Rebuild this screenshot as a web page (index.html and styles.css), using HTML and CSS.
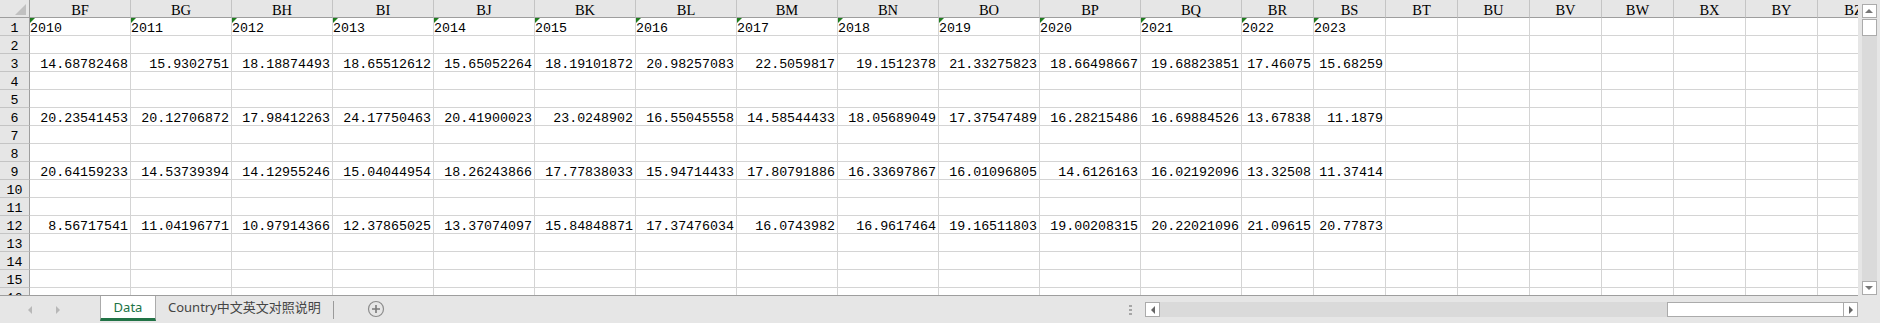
FILE: index.html
```html
<!DOCTYPE html>
<html lang="zh-CN">
<head>
    <meta charset="UTF-8">
    <meta name="viewport" content="width=device-width, initial-scale=1.0">
    <title>Data</title>
    <link rel="stylesheet" href="styles.css">
</head>
<body>
    <div class="window">
        <div class="main">
            <div class="grid" id="grid"></div>
            <div class="vscroll">
                <div class="sbtn up"><span class="tri-up"></span></div>
                <div class="vthumb"></div>
                <div class="vtrack"></div>
                <div class="sbtn down"><span class="tri-down"></span></div>
            </div>
        </div>
        <div class="bottom">
            <div class="tabnav">
                <span class="nav-left"></span>
                <span class="nav-right"></span>
            </div>
            <div class="tab active">Data</div>
            <div class="tab">Country中文英文对照说明</div>
            <div class="tabsep"></div>
            <div class="addtab">
                <svg width="18" height="18" viewBox="0 0 18 18">
                    <circle cx="9" cy="9" r="7.5" fill="none" stroke="#8c8c8c" stroke-width="1.2"/>
                    <path d="M9 5v8M5 9h8" stroke="#7a7a7a" stroke-width="1.6"/>
                </svg>
            </div>
            <div class="spacer"></div>
            <div class="dots"><i></i><i></i><i></i></div>
            <div class="hscroll">
                <div class="sbtn hbtn"><span class="tri-left"></span></div>
                <div class="htrack"></div>
                <div class="hthumb"></div>
                <div class="sbtn hbtn"><span class="tri-right"></span></div>
            </div>
        </div>
    </div>

    <script>
        const cols = ['BF','BG','BH','BI','BJ','BK','BL','BM','BN','BO','BP','BQ','BR','BS','BT','BU','BV','BW','BX','BY','BZ'];
        const values = {
            3: ['14.68782468','15.9302751','18.18874493','18.65512612','15.65052264','18.19101872','20.98257083','22.5059817','19.1512378','21.33275823','18.66498667','19.68823851','17.46075','15.68259'],
            6: ['20.23541453','20.12706872','17.98412263','24.17750463','20.41900023','23.0248902','16.55045558','14.58544433','18.05689049','17.37547489','16.28215486','16.69884526','13.67838','11.1879'],
            9: ['20.64159233','14.53739394','14.12955246','15.04044954','18.26243866','17.77838033','15.94714433','17.80791886','16.33697867','16.01096805','14.6126163','16.02192096','13.32508','11.37414'],
            12: ['8.56717541','11.04196771','10.97914366','12.37865025','13.37074097','15.84848871','17.37476034','16.0743982','16.9617464','19.16511803','19.00208315','20.22021096','21.09615','20.77873']
        };

        const grid = document.getElementById('grid');

        function addCell(cls, text) {
            const div = document.createElement('div');
            div.className = 'cell ' + cls;
            div.textContent = text || '';
            grid.appendChild(div);
        }

        addCell('corner');
        cols.forEach(c => addCell('colhead', c));

        for (let r = 1; r <= 16; r++) {
            addCell('rowhead', r);
            for (let i = 0; i < cols.length; i++) {
                if (r === 1 && i < 14) {
                    addCell('text flagged', 2010 + i);
                } else if (values[r] && i < 14) {
                    addCell('num', values[r][i]);
                } else {
                    addCell('');
                }
            }
        }
    </script>
</body>
</html>
```

FILE: styles.css
```css
body {
    margin: 0;
    background-color: #fff;
    font-family: "Liberation Mono", monospace;
}
.window {
    width: 1880px;
    height: 323px;
    display: flex;
    flex-direction: column;
    overflow: hidden;
}
.main {
    display: flex;
    height: 296px;
}
.grid {
    width: 1858px;
    display: grid;
    grid-template-columns: 30px repeat(12, 101px) repeat(9, 72px);
    grid-auto-rows: 18px;
    align-content: start;
    overflow: hidden;
    border-bottom: 1px solid #9e9e9e;
    box-sizing: border-box;
}
.cell {
    box-sizing: border-box;
    border-right: 1px solid #d4d4d4;
    border-bottom: 1px solid #d4d4d4;
    font-size: 13.3px;
    line-height: 17px;
    padding-top: 2px;
    white-space: nowrap;
    overflow: hidden;
    color: #000;
}
.corner {
    position: relative;
    background-color: #e6e6e6;
    border-right: 1px solid #9e9e9e;
    border-bottom: 1px solid #9e9e9e;
}
.corner::after {
    content: "";
    position: absolute;
    right: 3px;
    bottom: 2px;
    border-left: 11px solid transparent;
    border-bottom: 11px solid #c0c0c0;
}
.colhead {
    background-color: #e6e6e6;
    border-right-color: #c4c4c4;
    border-bottom: 1px solid #9e9e9e;
    text-align: center;
    font-family: "Liberation Serif", serif;
    font-size: 14.5px;
}
.rowhead {
    background-color: #e6e6e6;
    border-right: 1px solid #9e9e9e;
    border-bottom-color: #c4c4c4;
    text-align: center;
}
.num {
    text-align: right;
    padding-right: 2px;
}
.text {
    text-align: left;
}
.flagged {
    position: relative;
}
.flagged::before {
    content: "";
    position: absolute;
    left: 0;
    top: 0;
    border-top: 5px solid #1e7d1e;
    border-right: 5px solid transparent;
}

/* vertical scrollbar */
.vscroll {
    width: 22px;
    height: 296px;
    background-color: #e6e6e6;
    display: flex;
    flex-direction: column;
    align-items: center;
    padding: 4px 0 1px;
    box-sizing: border-box;
}
.sbtn {
    width: 15px;
    height: 14px;
    box-sizing: border-box;
    border: 1px solid #ababab;
    background-color: #fff;
    display: flex;
    align-items: center;
    justify-content: center;
    flex-shrink: 0;
}
.vthumb {
    width: 15px;
    height: 17px;
    margin-top: 1px;
    box-sizing: border-box;
    border: 1px solid #ababab;
    background-color: #fff;
}
.vtrack {
    flex: 1;
    width: 15px;
    background-color: #dadada;
}
.tri-up {
    border-left: 4px solid transparent;
    border-right: 4px solid transparent;
    border-bottom: 4px solid #777;
}
.tri-down {
    border-left: 4px solid transparent;
    border-right: 4px solid transparent;
    border-top: 4px solid #777;
}
.tri-left {
    border-top: 4px solid transparent;
    border-bottom: 4px solid transparent;
    border-right: 4px solid #666;
}
.tri-right {
    border-top: 4px solid transparent;
    border-bottom: 4px solid transparent;
    border-left: 4px solid #666;
}

/* sheet tabs */
.bottom {
    height: 27px;
    background-color: #e6e6e6;
    display: flex;
    align-items: stretch;
    font-family: "Noto Sans", "Noto Sans CJK SC", sans-serif;
    font-size: 13px;
}
.tabnav {
    width: 100px;
    display: flex;
    align-items: center;
    gap: 24px;
    padding-left: 28px;
    box-sizing: border-box;
}
.nav-left {
    border-top: 4px solid transparent;
    border-bottom: 4px solid transparent;
    border-right: 4px solid #b8b8b8;
}
.nav-right {
    border-top: 4px solid transparent;
    border-bottom: 4px solid transparent;
    border-left: 4px solid #b8b8b8;
}
.tab {
    padding: 0 12px;
    height: 25px;
    line-height: 23px;
    color: #444;
}
.tab.active {
    background-color: #fff;
    color: #217346;
    border-left: 1px solid #ababab;
    border-right: 1px solid #ababab;
    border-bottom: 3px solid #217346;
    box-sizing: border-box;
    height: 25px;
    width: 56px;
    padding: 0;
    text-align: center;
}
.tabsep {
    width: 1px;
    height: 18px;
    margin-top: 5px;
    background-color: #9a9a9a;
}
.addtab {
    margin-left: 33px;
    padding-top: 4px;
}
.spacer {
    flex: 1;
}
.dots {
    display: flex;
    flex-direction: column;
    justify-content: center;
    gap: 2px;
    margin-right: 13px;
}
.dots i {
    width: 3px;
    height: 2px;
    background-color: #a6a6a6;
}
.hscroll {
    width: 713px;
    margin-right: 22px;
    display: flex;
    align-items: flex-start;
    padding-top: 6px;
}
.hbtn {
    width: 15px;
    height: 15px;
}
.htrack {
    flex: 1;
    height: 15px;
    background-color: #dadada;
}
.hthumb {
    width: 176px;
    height: 15px;
    box-sizing: border-box;
    border: 1px solid #ababab;
    border-right: none;
    background-color: #fff;
}
```
